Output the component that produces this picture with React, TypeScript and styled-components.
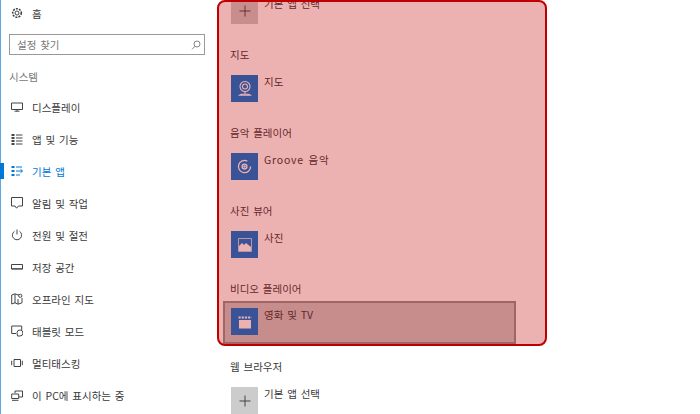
import React from 'react';
import styled, { createGlobalStyle } from 'styled-components';

const Global = createGlobalStyle`
  html, body { margin: 0; padding: 0; background: #fff; }
  body { width: 700px; height: 414px; overflow: hidden; font-family: "Noto Sans CJK KR", "Noto Sans", sans-serif; font-size: 10.5px; word-spacing: 1.5px; }
`;

const Page = styled.div`
  position: relative;
  width: 700px;
  height: 414px;
  display: flex;
  overflow: hidden;
  background: #fff;
`;

const Sidebar = styled.nav`
  width: 218px;
  height: 414px;
  box-sizing: border-box;
  border-left: 1px solid #5aa9e6;
  display: flex;
  flex-direction: column;
  flex: none;
`;

const NavRow = styled.div<{ $active?: boolean }>`
  height: 32px;
  flex: none;
  display: flex;
  align-items: center;
  gap: 9px;
  padding-left: 10px;
  color: ${p => (p.$active ? '#0078d7' : '#3a3a3a')};
  position: relative;
  svg { flex: none; }
`;

const ActiveMark = styled.span`
  position: absolute;
  left: -1px;
  top: 8px;
  width: 4px;
  height: 16px;
  background: #0078d7;
`;

const HomeRow = styled(NavRow)`
  height: 26px;
`;

const SearchBox = styled.div`
  margin: 8px 0 0 8px;
  width: 196px;
  height: 21px;
  box-sizing: border-box;
  border: 1px solid #999;
  display: flex;
  align-items: center;
  justify-content: space-between;
  padding: 0 3px 0 7px;
  color: #777;
`;

const SectionLabel = styled.div`
  margin: 14px 0 6px 8px;
  height: 16px;
  line-height: 16px;
  color: #777;
`;

const Main = styled.main`
  flex: 1;
  padding-left: 12px;
  margin-top: -15px;
  display: flex;
  flex-direction: column;
`;

const Group = styled.section`
  height: 78px;
  flex: none;
  display: flex;
  flex-direction: column;
`;

const FirstTile = styled.div`
  height: 61px;
  flex: none;
`;

const GroupTitle = styled.div`
  height: 17px;
  line-height: 17px;
  color: #3a3a3a;
`;

const AppRow = styled.div`
  display: flex;
  gap: 6px;
  margin-top: 12px;
  margin-left: 1px;
`;

const HoverRow = styled(AppRow)`
  box-sizing: border-box;
  width: 293px;
  height: 43px;
  margin: 4px 0 0 -7px;
  padding: 5px 6px;
  border: 2px solid #929292;
  background: #cacaca;
`;

const Tile = styled.div<{ $plain?: boolean }>`
  width: 27px;
  height: 27px;
  flex: none;
  background: ${p => (p.$plain ? '#cccccc' : '#0078d7')};
  display: flex;
  align-items: center;
  justify-content: center;
`;

const AppName = styled.div<{ $wide?: boolean }>`
  line-height: 14px;
  color: #3a3a3a;
  letter-spacing: ${p => (p.$wide ? '0.8px' : '0')};
`;

const Overlay = styled.div`
  position: absolute;
  left: 217px;
  top: 0;
  width: 330px;
  height: 346px;
  box-sizing: border-box;
  border: 2px solid #c00000;
  border-radius: 8px;
  background: rgba(192, 0, 0, 0.3);
`;

const stroke = { fill: 'none', stroke: '#444', strokeWidth: 1 };

const Gear = () => (
  <svg width="12" height="12" viewBox="0 0 12 12" {...stroke}>
    <circle cx="6" cy="6" r="2" />
    <circle cx="6" cy="6" r="4.3" strokeDasharray="2 1.1" strokeWidth="1.6" />
  </svg>
);
const Search = () => (
  <svg width="10" height="10" viewBox="0 0 10 10" fill="none" stroke="#888" strokeWidth="1">
    <circle cx="6" cy="4" r="3" />
    <path d="M4 6.2 1 9.3" />
  </svg>
);
const Monitor = () => (
  <svg width="12" height="10" viewBox="0 0 12 10" {...stroke}>
    <path d="M.5 1h11v6.5H.5z M3.5 9.2h5M6 7.5v1.7" />
  </svg>
);
const Apps = ({ c = '#444' }: { c?: string }) => (
  <svg width="12" height="11" viewBox="0 0 12 11" fill="none" stroke={c}>
    <path d="M.5 1h3M.5 4h3M.5 7h3M.5 10h3" strokeWidth="2" />
    <path d="M5 1h6.5M5 4h6.5M5 7h6.5M5 10h6.5" strokeWidth="1" />
  </svg>
);
const Defaults = ({ c = '#0078d7' }: { c?: string }) => (
  <svg width="12" height="10" viewBox="0 0 12 10" fill="none" stroke={c} strokeWidth="1">
    <path d="M.5 1h3M.5 5h3M.5 9h3" strokeWidth="1.8" />
    <path d="M5 1h6M5 5h6.5M9.5 3.2l2 1.8-2 1.8M5 9h4" />
  </svg>
);
const Message = () => (
  <svg width="12" height="12" viewBox="0 0 12 12" {...stroke}>
    <path d="M.5.5h11v8.5H7.5L5.5 11.2 4 9H.5z" />
  </svg>
);
const Power = () => (
  <svg width="12" height="12" viewBox="0 0 12 12" {...stroke}>
    <path d="M3.5 2.3a4.6 4.6 0 1 0 5 0M6 .5v5" />
  </svg>
);
const Storage = () => (
  <svg width="12" height="8" viewBox="0 0 12 8" {...stroke}>
    <path d="M.5 1.5h11v4.5H.5z" />
    <path d="M.5 5.8h11" />
  </svg>
);
const MapIcon = () => (
  <svg width="12" height="13" viewBox="0 0 12 13" {...stroke}>
    <path d="M.7 2 4 .8l3 1.2 1-.3M.7 2v9L4 9.8l3 1.4 4-1.4V5M4 1v9M7 6v5" />
    <circle cx="9.3" cy="2.8" r="1.6" />
  </svg>
);
const Tablet = () => (
  <svg width="12" height="12" viewBox="0 0 12 12" {...stroke}>
    <path d="M5 8.5H.7V1h10v4" />
    <path d="M6 7.5a3 3 0 1 1 3 3.5H6.5z" />
  </svg>
);
const Multi = () => (
  <svg width="12" height="8" viewBox="0 0 12 8" {...stroke}>
    <path d="M3 .5h6.5v7H3zM.7 1.8v4.4M11.3 1.8v4.4" />
  </svg>
);
const Project = () => (
  <svg width="12" height="11" viewBox="0 0 12 11" {...stroke}>
    <path d="M4 3V1h7.5v6H8" />
    <path d="M.7 4h7v4.5h-7zM1 10.3h6.5" />
  </svg>
);

const Plus = () => (
  <svg width="12" height="12" viewBox="0 0 12 12" fill="none" stroke="#444" strokeWidth="1">
    <path d="M6 .5v11M.5 6h11" />
  </svg>
);
const MapsGlyph = () => (
  <svg width="14" height="17" viewBox="0 0 14 17" fill="none" stroke="#fff" strokeWidth="1.1">
    <circle cx="7" cy="6.5" r="5" />
    <circle cx="7" cy="6.5" r="2.5" />
    <path d="M7 11.5v2.5M1.5 15.2c2-1.6 9-1.6 11 0z" />
  </svg>
);
const Disc = () => (
  <svg width="15" height="15" viewBox="0 0 16 16" fill="none" stroke="#fff" strokeWidth="1.4">
    <path d="M14.5 8A6.5 6.5 0 1 1 11 2.3" />
    <circle cx="8" cy="8" r="2.6" />
    <circle cx="8" cy="8" r=".6" fill="#fff" />
  </svg>
);
const Photo = () => (
  <svg width="14" height="14" viewBox="0 0 14 14">
    <path d="M.5.5h13v13H.5z" fill="none" stroke="#fff" strokeWidth="1" opacity=".7" />
    <path d="M1 13V8l3-3 2 2 2-2 5 4v4z" fill="#fff" />
  </svg>
);
const Clapper = () => (
  <svg width="14" height="14" viewBox="0 0 14 14">
    <rect x="1" y="5" width="12" height="8.5" fill="#fff" />
    <path d="M.5 2.5h13" stroke="#fff" strokeWidth="2" strokeDasharray="2.2 1" />
  </svg>
);

const nav = [
  { label: '디스플레이', icon: <Monitor /> },
  { label: '앱 및 기능', icon: <Apps /> },
  { label: '기본 앱', icon: <Defaults />, active: true },
  { label: '알림 및 작업', icon: <Message /> },
  { label: '전원 및 절전', icon: <Power /> },
  { label: '저장 공간', icon: <Storage /> },
  { label: '오프라인 지도', icon: <MapIcon /> },
  { label: '태블릿 모드', icon: <Tablet /> },
  { label: '멀티태스킹', icon: <Multi /> },
  { label: '이 PC에 표시하는 중', icon: <Project /> },
];

const groups = [
  { title: '지도', name: '지도', icon: <MapsGlyph /> },
  { title: '음악 플레이어', name: 'Groove 음악', icon: <Disc />, wide: true },
  { title: '사진 뷰어', name: '사진', icon: <Photo /> },
];

export default function App() {
  return (
    <Page>
      <Global />
      <Sidebar>
        <HomeRow><Gear />홈</HomeRow>
        <SearchBox>설정 찾기<Search /></SearchBox>
        <SectionLabel>시스템</SectionLabel>
        {nav.map(n => (
          <NavRow key={n.label} $active={n.active}>
            {n.active && <ActiveMark />}
            {n.icon}
            {n.label}
          </NavRow>
        ))}
      </Sidebar>
      <Main>
        <FirstTile>
          <AppRow>
            <Tile $plain><Plus /></Tile>
            <AppName>기본 앱 선택</AppName>
          </AppRow>
        </FirstTile>
        {groups.map(g => (
          <Group key={g.title}>
            <GroupTitle>{g.title}</GroupTitle>
            <AppRow>
              <Tile>{g.icon}</Tile>
              <AppName $wide={g.wide}>{g.name}</AppName>
            </AppRow>
          </Group>
        ))}
        <Group>
          <GroupTitle>비디오 플레이어</GroupTitle>
          <HoverRow>
            <Tile><Clapper /></Tile>
            <AppName>영화 및 TV</AppName>
          </HoverRow>
        </Group>
        <Group>
          <GroupTitle>웹 브라우저</GroupTitle>
          <AppRow>
            <Tile $plain><Plus /></Tile>
            <AppName>기본 앱 선택</AppName>
          </AppRow>
        </Group>
      </Main>
      <Overlay />
    </Page>
  );
}
